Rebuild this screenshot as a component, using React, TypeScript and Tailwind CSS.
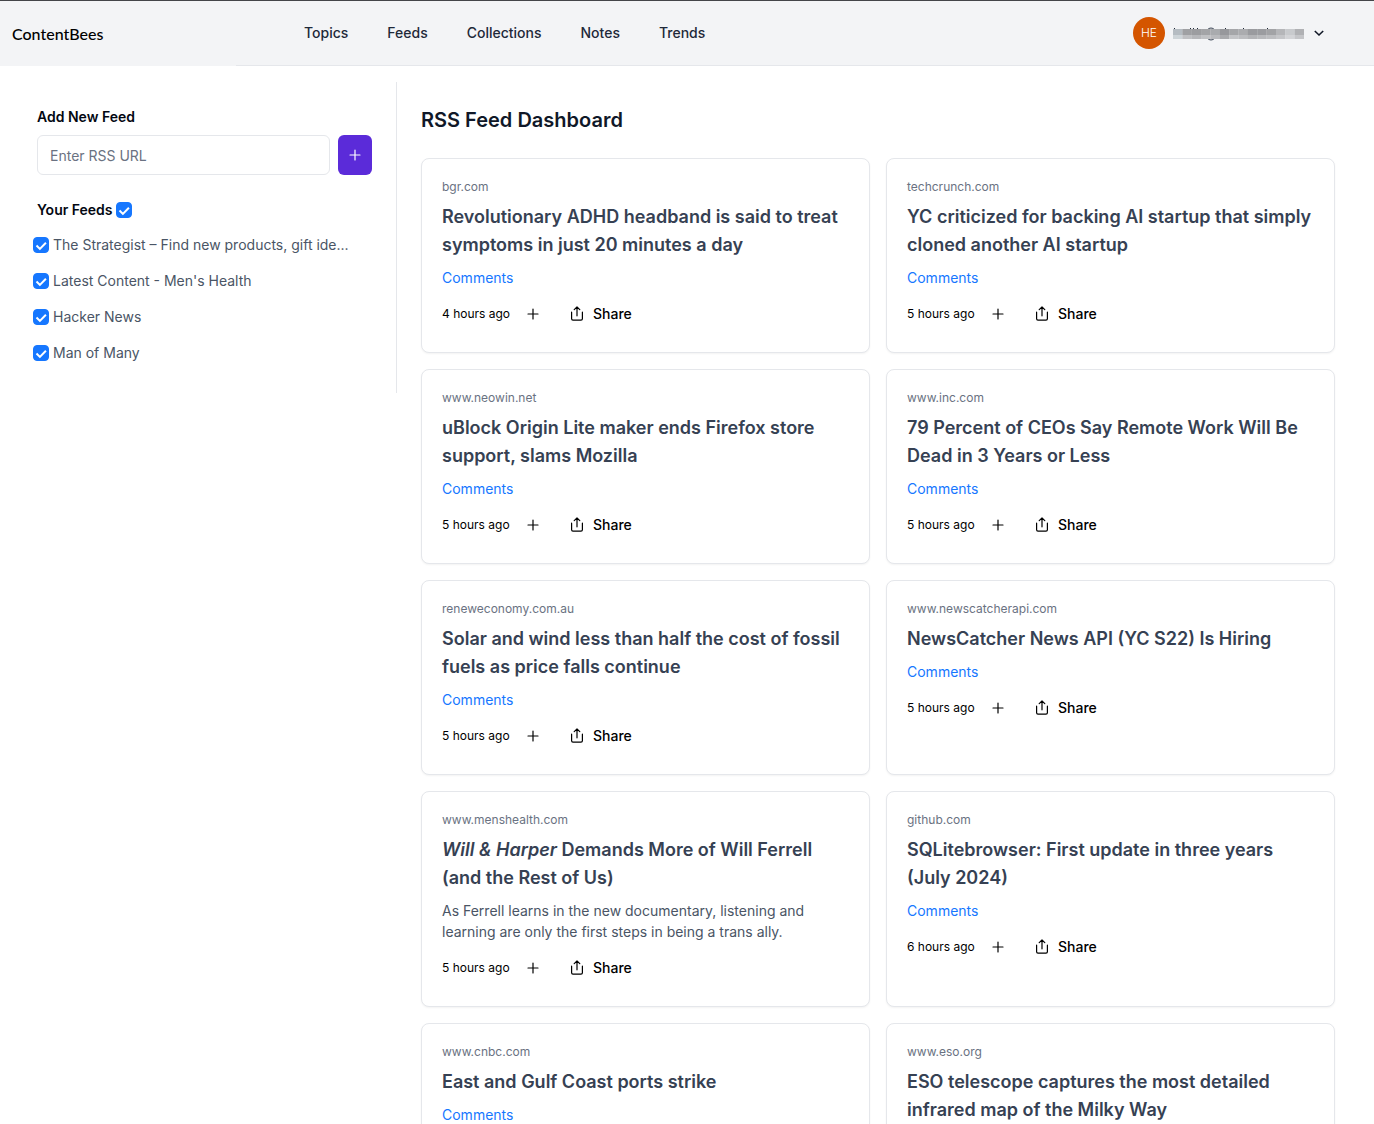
import { useState } from 'react'
import type { ReactNode } from 'react'

const navItems = ['Topics', 'Feeds', 'Collections', 'Notes', 'Trends']

const feeds = [
  'The Strategist – Find new products, gift ide...',
  "Latest Content - Men's Health",
  'Hacker News',
  'Man of Many',
]

type Article = { source: string; title: ReactNode; time: string; summary?: string }

const articles: Article[] = [
  { source: 'bgr.com', title: 'Revolutionary ADHD headband is said to treat symptoms in just 20 minutes a day', time: '4 hours ago' },
  { source: 'techcrunch.com', title: 'YC criticized for backing AI startup that simply cloned another AI startup', time: '5 hours ago' },
  { source: 'www.neowin.net', title: 'uBlock Origin Lite maker ends Firefox store support, slams Mozilla', time: '5 hours ago' },
  { source: 'www.inc.com', title: '79 Percent of CEOs Say Remote Work Will Be Dead in 3 Years or Less', time: '5 hours ago' },
  { source: 'reneweconomy.com.au', title: 'Solar and wind less than half the cost of fossil fuels as price falls continue', time: '5 hours ago' },
  { source: 'www.newscatcherapi.com', title: 'NewsCatcher News API (YC S22) Is Hiring', time: '5 hours ago' },
  {
    source: 'www.menshealth.com',
    title: <><em>Will &amp; Harper</em> Demands More of Will Ferrell (and the Rest of Us)</>,
    time: '5 hours ago',
    summary: 'As Ferrell learns in the new documentary, listening and learning are only the first steps in being a trans ally.',
  },
  { source: 'github.com', title: 'SQLitebrowser: First update in three years (July 2024)', time: '6 hours ago' },
  { source: 'www.cnbc.com', title: 'East and Gulf Coast ports strike', time: '6 hours ago' },
  { source: 'www.eso.org', title: 'ESO telescope captures the most detailed infrared map of the Milky Way', time: '6 hours ago' },
]

function PlusIcon() {
  return (
    <svg width="16" height="16" viewBox="0 0 16 16" fill="none" stroke="currentColor" strokeWidth="1.2" strokeLinecap="round" aria-hidden="true">
      <path d="M8 3v10M3 8h10" />
    </svg>
  )
}

function ShareIcon() {
  return (
    <svg width="16" height="16" viewBox="0 0 16 16" fill="none" stroke="currentColor" strokeWidth="1.2" strokeLinecap="round" strokeLinejoin="round" aria-hidden="true">
      <path d="M2.6 6.2v6.6a1.4 1.4 0 0 0 1.4 1.4h8a1.4 1.4 0 0 0 1.4-1.4V6.2" />
      <path d="M8 9.8V1.2M5.2 3.6L8 1l2.8 2.6" />
    </svg>
  )
}

function Checkbox({ id, checked, onChange, label }: { id: string; checked: boolean; onChange: () => void; label?: string }) {
  return (
    <span className="grid size-4 shrink-0">
      <input
        id={id}
        type="checkbox"
        aria-label={label}
        checked={checked}
        onChange={onChange}
        className="peer col-start-1 row-start-1 size-4 appearance-none rounded border border-gray-300 bg-white checked:border-[#1677ff] checked:bg-[#1677ff]"
      />
      <svg
        viewBox="0 0 16 16"
        className="pointer-events-none col-start-1 row-start-1 size-4 opacity-0 peer-checked:opacity-100"
        fill="none"
        stroke="#fff"
        strokeWidth="2"
        aria-hidden="true"
      >
        <path d="M3.5 8.5l3.4 3.4 6-6.2" />
      </svg>
    </span>
  )
}

const maskTop = ['#b5bcc2', '#9fa0a3', '#9c9da0', '#a3a4a7', '#a9abae', '#97989c', '#a5a6a9', '#abacaf', '#9a9b9f', '#9b9ca0', '#a2a3a6', '#b5b6b9', '#c8cacd', '#b0b1b4']
const maskBottom = ['#cdd4d8', '#bfc0c3', '#b6b7ba', '#c0c1c4', '#b9babd', '#a9aaad', '#c3c4c7', '#bcbdc0', '#b3b4b7', '#b8b9bc', '#bdbec1', '#c5c6c9', '#d3d4d7', '#c4c5c8']

// Account address, pixelated; only the tips of the tall letters stay visible
function MaskedEmail() {
  return (
    <svg width="131" height="16" viewBox="0 0 131 16" className="ml-2" aria-hidden="true">
      <g fill="#1f2937">
        <rect x="1" y="3" width="1" height="2" />
        <rect x="17" y="3" width="1" height="2" />
        <rect x="20" y="3" width="1" height="2" />
        <rect x="24" y="3" width="1" height="2" />
        <rect x="52" y="3" width="1" height="2" />
        <rect x="70" y="3" width="1" height="2" />
        <rect x="94" y="3" width="1" height="2" />
      </g>
      <ellipse cx="38" cy="9" rx="5" ry="6" fill="none" stroke="#374151" />
      {maskTop.map((color, i) => (
        <rect key={i} x={i * 9.36} y="4" width="9.5" height="6" fill={color} />
      ))}
      {maskBottom.map((color, i) => (
        <rect key={i} x={i * 9.36} y="10" width="9.5" height="4" fill={color} />
      ))}
    </svg>
  )
}

function Header() {
  return (
    <header className="flex h-[66px] border-t border-[#444549] bg-gray-100">
      <div className="flex w-[236px] shrink-0 items-center pl-3">
        <a href="#" className="font-['Lato',sans-serif] text-base font-medium text-black">ContentBees</a>
      </div>
      <div className="flex flex-1 items-center justify-between border-b border-gray-200 pr-[49px] pl-[68px]">
        <nav className="flex gap-[39px]">
          {navItems.map((item) => (
            <a key={item} href="#" className="text-sm font-medium text-gray-800">{item}</a>
          ))}
        </nav>
        <button type="button" aria-label="Account menu" className="flex items-center">
          <span className="flex size-8 items-center justify-center rounded-full bg-[#d45500] text-xs font-light text-white">HE</span>
          <MaskedEmail />
          <svg width="12" height="12" viewBox="0 0 12 12" fill="none" stroke="#111827" strokeWidth="1.6" className="ml-[9px]" aria-hidden="true">
            <path d="M1.8 4l4.2 4 4.2-4" />
          </svg>
        </button>
      </div>
    </header>
  )
}

function Sidebar() {
  const [selected, setSelected] = useState<boolean[]>(feeds.map(() => true))
  const allSelected = selected.every(Boolean)

  return (
    <aside className="w-96 shrink-0 border-r border-gray-200 p-6">
      <form onSubmit={(e) => e.preventDefault()}>
        <label htmlFor="feed-url" className="mb-2 block text-sm leading-[21px] font-semibold text-gray-950">Add New Feed</label>
        <div className="flex gap-2">
          <input
            id="feed-url"
            type="text"
            placeholder="Enter RSS URL"
            className="h-10 min-w-0 flex-1 rounded-md border border-gray-200 px-3 text-sm placeholder:text-gray-500"
          />
          <button type="submit" aria-label="Add feed" className="flex h-10 w-[34px] items-center justify-center rounded-md bg-[#5b2bd9] text-white">
            <PlusIcon />
          </button>
        </div>
      </form>

      <div className="mt-6 mb-2 flex items-center gap-[3px]">
        <h2 className="text-sm leading-[22px] font-semibold text-gray-950">Your Feeds</h2>
        <Checkbox
          id="all-feeds"
          label="Select all feeds"
          checked={allSelected}
          onChange={() => setSelected(feeds.map(() => !allSelected))}
        />
      </div>
      <ul className="-ml-1 space-y-1">
        {feeds.map((feed, i) => (
          <li key={feed} className="flex h-8 items-center gap-1">
            <Checkbox
              id={`feed-${i}`}
              checked={selected[i]}
              onChange={() => setSelected(selected.map((s, j) => (j === i ? !s : s)))}
            />
            <label htmlFor={`feed-${i}`} className="text-sm whitespace-nowrap text-gray-600">{feed}</label>
          </li>
        ))}
      </ul>
    </aside>
  )
}

function ArticleCard({ article }: { article: Article }) {
  return (
    <article className="rounded-lg border border-gray-200 bg-white p-5 shadow-xs">
      <p className="mb-2 text-xs text-gray-500">{article.source}</p>
      <h2 className="mb-2 text-lg leading-7 font-semibold text-gray-700">{article.title}</h2>
      {article.summary ? (
        <p className="text-sm leading-[21px] text-gray-600">{article.summary}</p>
      ) : (
        <a href="#" className="block text-sm leading-[21px] text-[#1677ff]">Comments</a>
      )}
      <div className="mt-2 flex h-9 items-center text-black">
        <span className="w-[67px] text-xs whitespace-nowrap">{article.time}</span>
        <button type="button" aria-label="Add to collection" className="ml-4">
          <PlusIcon />
        </button>
        <button type="button" className="ml-7 flex items-center gap-2 text-sm font-medium">
          <ShareIcon />
          Share
        </button>
      </div>
    </article>
  )
}

export default function App() {
  return (
    <div className="h-screen overflow-hidden bg-white font-['Inter',sans-serif]">
      <Header />
      <div className="flex items-start pt-4 pr-[15px] pl-[13px]">
        <Sidebar />
        <main className="min-w-0 flex-1 p-6">
          <h1 className="mb-6 text-xl leading-7 font-semibold text-gray-900">RSS Feed Dashboard</h1>
          <div className="grid grid-cols-2 gap-4">
            {articles.map((article) => (
              <ArticleCard key={article.source} article={article} />
            ))}
          </div>
        </main>
      </div>
    </div>
  )
}
